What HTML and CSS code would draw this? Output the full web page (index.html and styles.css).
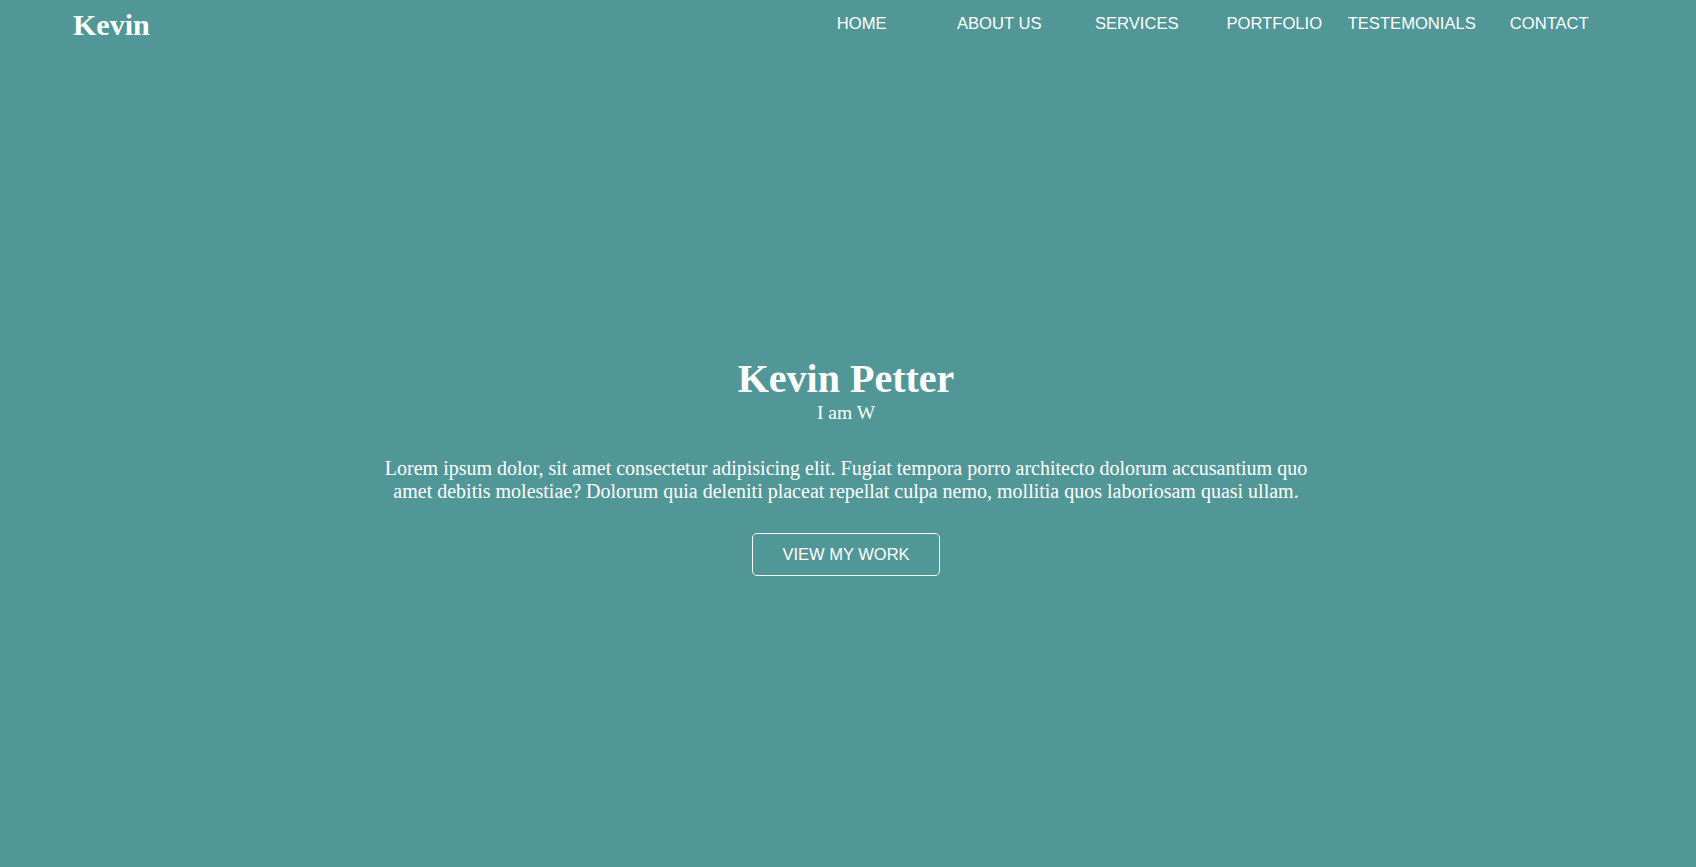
FILE: index.html
```html
<!DOCTYPE html>
<html lang="en">
<head>
<meta charset="utf-8">
<title>Kevin</title>
<link rel="stylesheet" href="styles.css">
</head>
<body>
<header class="header">
  <div class="logo">Kevin</div>
  <ul class="menu">
    <li><a href="#">HOME</a></li>
    <li><a href="#">ABOUT US</a></li>
    <li><a href="#">SERVICES</a></li>
    <li><a href="#">PORTFOLIO</a></li>
    <li><a href="#">TESTEMONIALS</a></li>
    <li><a href="#">CONTACT</a></li>
  </ul>
</header>
<section class="hero">
  <h1 class="hero-title">Kevin Petter</h1>
  <div class="hero-sub">I am W</div>
  <p class="hero-text">Lorem ipsum dolor, sit amet consectetur adipisicing elit. Fugiat tempora porro architecto dolorum accusantium quo amet debitis molestiae? Dolorum quia deleniti placeat repellat culpa nemo, mollitia quos laboriosam quasi ullam.</p>
  <a class="btn" href="#">VIEW MY WORK</a>
</section>
</body>
</html>
```
FILE: styles.css
```css
* { box-sizing: border-box; }
html, body {
  margin: 0;
  padding: 0;
}
body {
  background: #529797;
  color: #fff;
  font-family: "Liberation Serif", "Times New Roman", serif;
  min-height: 867px;
}
.header {
  display: flex;
  justify-content: space-between;
  align-items: center;
  padding: 6px 78px 0 73px;
}
.logo {
  font-size: 30px;
  font-weight: bold;
  line-height: 37px;
}
.menu {
  list-style: none;
  margin: 0;
  padding: 0;
  display: grid;
  grid-template-columns: repeat(6, 137.5px);
  align-self: flex-start;
  padding-top: 8px;
}
.menu li {
  text-align: center;
}
.menu a {
  color: #fff;
  text-decoration: none;
  font-family: "Liberation Sans", Arial, sans-serif;
  font-size: 16.6px;
}
.hero {
  display: flex;
  flex-direction: column;
  align-items: center;
  text-align: center;
  padding-top: 313px;
  padding-right: 4px;
}
.hero-title {
  margin: 0;
  font-size: 40px;
  font-weight: bold;
  line-height: 46px;
}
.hero-sub {
  font-size: 19.5px;
  line-height: 22px;
}
.hero-text {
  max-width: 945px;
  margin: 33px 0 30px;
  font-size: 20px;
  line-height: 23px;
}
.btn {
  display: inline-block;
  white-space: nowrap;
  color: #fff;
  text-decoration: none;
  font-family: "Liberation Sans", Arial, sans-serif;
  font-size: 16.5px;
  line-height: 19px;
  padding: 11px 29px;
  border: 1px solid #fff;
  border-radius: 5px;
}
```
